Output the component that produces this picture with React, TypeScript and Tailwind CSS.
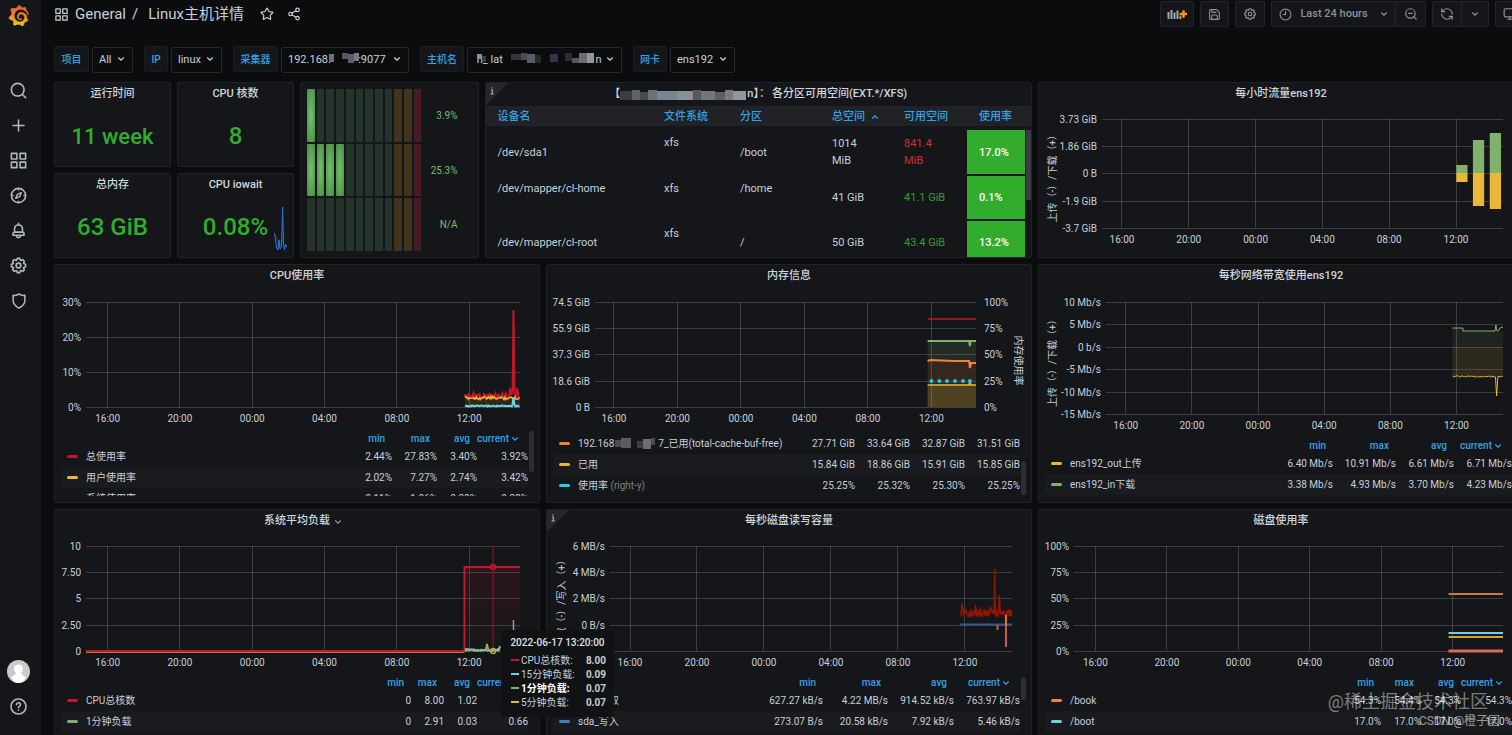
import React from "react";
import { Clock9, Monitor, RefreshCcw, Save, Share2, Star, ZoomOut } from "lucide-react";
import { SiGrafana } from "react-icons/si";

const ICONS = {
  search:
    "M21.71,20.29,18,16.61A9,9,0,1,0,16.61,18l3.68,3.68a1,1,0,0,0,1.42,0A1,1,0,0,0,21.71,20.29ZM11,18a7,7,0,1,1,7-7A7,7,0,0,1,11,18Z",
  plus: "M19,11H13V5a1,1,0,0,0-2,0v6H5a1,1,0,0,0,0,2h6v6a1,1,0,0,0,2,0V13h6a1,1,0,0,0,0-2Z",
  apps: "M10,13H3a1,1,0,0,0-1,1v7a1,1,0,0,0,1,1h7a1,1,0,0,0,1-1V14A1,1,0,0,0,10,13ZM9,20H4V15H9ZM21,2H14a1,1,0,0,0-1,1v7a1,1,0,0,0,1,1h7a1,1,0,0,0,1-1V3A1,1,0,0,0,21,2ZM20,9H15V4h5Zm1,4H14a1,1,0,0,0-1,1v7a1,1,0,0,0,1,1h7a1,1,0,0,0,1-1V14A1,1,0,0,0,21,13Zm-1,7H15V15h5ZM10,2H3A1,1,0,0,0,2,3v7a1,1,0,0,0,1,1h7a1,1,0,0,0,1-1V3A1,1,0,0,0,10,2ZM9,9H4V4H9Z",
  bell: "M18,13.18V10a6,6,0,0,0-5-5.91V3a1,1,0,0,0-2,0V4.09A6,6,0,0,0,6,10v3.18A3,3,0,0,0,4,16v2a1,1,0,0,0,1,1H8.14a4,4,0,0,0,7.72,0H19a1,1,0,0,0,1-1V16A3,3,0,0,0,18,13.18ZM8,10a4,4,0,0,1,8,0v3H8Zm4,10a2,2,0,0,1-1.72-1h3.44A2,2,0,0,1,12,20Zm6-3H6V16a1,1,0,0,1,1-1H17a1,1,0,0,1,1,1Z",
  cog: "M21.32,9.55l-1.89-.63.89-1.78A1,1,0,0,0,20.13,6L18,3.87a1,1,0,0,0-1.15-.19l-1.78.89-.63-1.89A1,1,0,0,0,13.5,2h-3a1,1,0,0,0-.95.68L8.92,4.57,7.14,3.68A1,1,0,0,0,6,3.87L3.87,6a1,1,0,0,0-.19,1.15l.89,1.78-1.89.63A1,1,0,0,0,2,10.5v3a1,1,0,0,0,.68.95l1.89.63-.89,1.78A1,1,0,0,0,3.87,18L6,20.13a1,1,0,0,0,1.15.19l1.78-.89.63,1.89a1,1,0,0,0,.95.68h3a1,1,0,0,0,.95-.68l.63-1.89,1.78.89A1,1,0,0,0,18,20.13L20.13,18a1,1,0,0,0,.19-1.15l-.89-1.78,1.89-.63A1,1,0,0,0,22,13.5v-3A1,1,0,0,0,21.32,9.55ZM20,12.78l-1.2.4A2,2,0,0,0,17.64,16l.57,1.14-1.1,1.1L16,17.64a2,2,0,0,0-2.79,1.16l-.4,1.2H11.22l-.4-1.2A2,2,0,0,0,8,17.64l-1.14.57-1.1-1.1L6.36,16A2,2,0,0,0,5.2,13.18L4,12.78V11.22l1.2-.4A2,2,0,0,0,6.36,8L5.79,6.89l1.1-1.1L8,6.36A2,2,0,0,0,10.82,5.2l.4-1.2h1.56l.4,1.2A2,2,0,0,0,16,6.36l1.14-.57,1.1,1.1L17.64,8a2,2,0,0,0,1.16,2.79l1.2.4ZM12,8a4,4,0,1,0,4,4A4,4,0,0,0,12,8Zm0,6a2,2,0,1,1,2-2A2,2,0,0,1,12,14Z",
};

function Icon({ d, className }: { d: string; className: string }) {
  return (
    <svg viewBox="0 0 24 24" fill="currentColor" className={className} aria-hidden="true">
      <path d={d} />
    </svg>
  );
}

function StrokeIcon({ className, children }: { className: string; children: React.ReactNode }) {
  return (
    <svg
      viewBox="0 0 24 24"
      fill="none"
      stroke="currentColor"
      strokeWidth="2"
      strokeLinecap="round"
      strokeLinejoin="round"
      className={className}
      aria-hidden="true"
    >
      {children}
    </svg>
  );
}

function Chevron({ className, up }: { className: string; up?: boolean }) {
  return (
    <svg viewBox="0 0 8 8" fill="none" stroke="currentColor" strokeWidth="1.2" strokeLinecap="round" className={className} aria-hidden="true">
      <path d={up ? "M1.5 5.2 4 2.8 6.5 5.2" : "M1.5 2.8 4 5.2 6.5 2.8"} />
    </svg>
  );
}

/* ---------- navigation ---------- */

function NavItem({ label, children }: { label: string; children: React.ReactNode }) {
  return (
    <a href="#" aria-label={label} className="flex h-[35px] w-full items-center justify-center pr-1">
      {children}
    </a>
  );
}

function Sidebar() {
  return (
    <nav className="flex w-[41px] shrink-0 flex-col bg-[#141619] text-[#b4b7bd]">
      <a href="#" aria-label="Grafana" className="flex h-[30px] items-center justify-center pr-1">
        <svg width="0" height="0" aria-hidden="true">
          <defs>
            <linearGradient id="brand" x1="0" y1="0" x2="0" y2="1">
              <stop offset="0" stopColor="#f0532a" />
              <stop offset="0.5" stopColor="#f5882a" />
              <stop offset="1" stopColor="#fbca0a" />
            </linearGradient>
          </defs>
        </svg>
        <SiGrafana fill="url(#brand)" stroke="url(#brand)" strokeWidth="0.6" className="size-[21px] shrink-0" />
      </a>
      <div className="mt-[43px] flex flex-col">
        <NavItem label="Search">
          <Icon d={ICONS.search} className="size-[19px]" />
        </NavItem>
        <NavItem label="Create">
          <Icon d={ICONS.plus} className="size-[19px]" />
        </NavItem>
        <NavItem label="Dashboards">
          <Icon d={ICONS.apps} className="size-[19px]" />
        </NavItem>
        <NavItem label="Explore">
          <StrokeIcon className="size-[19px]">
            <circle cx="12" cy="12" r="9" />
            <path d="M10.6 10.6 15.6 8.4 13.4 13.4 8.4 15.6Z" strokeWidth="1.7" />
            <path d="M12 3.5v1.6M12 19v1.5M3.5 12h1.6M19 12h1.5" strokeWidth="1.6" />
          </StrokeIcon>
        </NavItem>
        <NavItem label="Alerting">
          <Icon d={ICONS.bell} className="size-[19px]" />
        </NavItem>
        <NavItem label="Configuration">
          <Icon d={ICONS.cog} className="size-[19px]" />
        </NavItem>
        <NavItem label="Server admin">
          <StrokeIcon className="size-[18px]">
            <path d="M4.2 4.4C7.5 5 10 4.2 12 2.6 14 4.2 16.5 5 19.8 4.4V11.5C19.8 15.5 16.5 18.8 12 21.4 7.5 18.8 4.2 15.5 4.2 11.5Z" />
          </StrokeIcon>
        </NavItem>
      </div>
      <div className="mt-auto mb-[11px] flex flex-col">
        <NavItem label="Profile">
          <svg viewBox="0 0 22 22" className="size-[23px]" aria-hidden="true">
            <circle cx="11" cy="11" r="11" fill="#c9cacb" />
            <path d="M11 4.2c2.6 0 4.3 1.8 4.3 4.2 0 1.7-.7 3.2-1.8 4 .2 2.2 3.6 2 4.5 4.4C16.500 19.800 14 22 11 22s-5.500-2.200-7-5.200c.9-2.400 4.300-2.200 4.500-4.400-1.100-.8-1.800-2.300-1.800-4C6.700 6 8.400 4.200 11 4.200Z" fill="#fff" />
          </svg>
        </NavItem>
        <NavItem label="Help">
          <StrokeIcon className="size-[19px]">
            <circle cx="12" cy="12" r="9.500" />
            <path d="M9.400 9.600c.2-1.500 1.200-2.300 2.600-2.300 1.500 0 2.600.9 2.600 2.300 0 1.800-2.600 2-2.600 3.900M12 16.600v.1" />
          </StrokeIcon>
        </NavItem>
      </div>
    </nav>
  );
}

const TOOL = "flex h-[26px] items-center justify-center border border-[#222428] bg-[#141619] text-[#8e9196]";

function TopBar() {
  return (
    <header className="flex h-7 items-center justify-between text-[#c7d0d9]">
      <div className="flex items-center">
        <Icon d={ICONS.apps} className="size-[15px]" />
        <h1 className="ml-1.5 text-[15px] leading-7 whitespace-pre">
          <a href="#">General</a>
          <span className="mx-1.5">/</span>
          <a href="#" className="ml-1">Linux主机详情</a>
        </h1>
        <button type="button" aria-label="Mark as favorite" className="ml-4">
          <Star className="size-[14px]" />
        </button>
        <button type="button" aria-label="Share dashboard" className="ml-[13px]">
          <Share2 className="size-[14px]" />
        </button>
      </div>
      <div className="flex">
        <button type="button" aria-label="Add panel" className={`${TOOL} mr-1.5 w-[34px] rounded-xs`}>
          <svg viewBox="0 0 20 14" className="h-[14px] w-[20px]" aria-hidden="true">
            <path d="M1.500 5v7M4.500 3v9M7.500 5.500V12M10.500 3.500V12M13.500 7v5" stroke="#a3a6ab" strokeWidth="2" />
            <path d="M16.500 3v8M12.500 7h8" stroke="#141619" strokeWidth="4" />
            <path d="M16.500 3.300v7.400M12.800 7h7.200" stroke="#f79520" strokeWidth="2.400" />
          </svg>
        </button>
        <button type="button" aria-label="Save dashboard" className={`${TOOL} mr-1.5 w-[29px] rounded-xs`}>
          <Save className="size-[13px]" />
        </button>
        <button type="button" aria-label="Dashboard settings" className={`${TOOL} mr-1.5 w-[30px] rounded-xs`}>
          <Icon d={ICONS.cog} className="size-[14px]" />
        </button>
        <button type="button" className={`${TOOL} w-[125px] gap-2 rounded-l-xs text-[11px] font-medium`}>
          <Clock9 className="size-[13px]" />
          Last 24 hours
          <Chevron className="ml-1 size-2" />
        </button>
        <button type="button" aria-label="Zoom out" className={`${TOOL} mr-1.5 w-[30px] rounded-r-xs border-l-0`}>
          <ZoomOut className="size-[14px]" />
        </button>
        <button type="button" aria-label="Refresh" className={`${TOOL} w-[30px] rounded-l-xs`}>
          <RefreshCcw className="size-[14px]" />
        </button>
        <button type="button" aria-label="Refresh interval" className={`${TOOL} mr-1.5 w-[27px] rounded-r-xs border-l-0`}>
          <Chevron className="size-2" />
        </button>
        <button type="button" aria-label="Cycle view mode" className={`${TOOL} w-[29px] rounded-xs`}>
          <Monitor className="size-[14px]" />
        </button>
      </div>
    </header>
  );
}

/* ---------- template variables ---------- */

type Block = [number, number, number, number, string];

function Mosaic({ blocks, className }: { blocks: Block[]; className: string }) {
  return (
    <svg className={`pointer-events-none overflow-visible ${className}`} shapeRendering="crispEdges" aria-hidden="true">
      {blocks.map(([x, y, w, h, fill], i) => (
        <rect key={i} x={x} y={y} width={w} height={h} fill={fill} />
      ))}
    </svg>
  );
}

function Variable({
  id,
  label,
  labelWidth,
  value,
  width,
  blocks,
}: {
  id: string;
  label: string;
  labelWidth: string;
  value: string;
  width: string;
  blocks?: Block[];
}) {
  return (
    <div className="flex h-[26px] gap-[3px]">
      <label
        htmlFor={id}
        className={`flex items-center justify-center rounded-xs border border-[#1b1d20] bg-[#141619] text-[10px] font-medium text-[#33a2e5] ${labelWidth}`}
      >
        {label}
      </label>
      <div className={`relative ${width}`}>
        <select id={id} className="size-full appearance-none rounded-xs border border-[#26282c] bg-[#0b0c0e] pl-1.5 text-[11px] text-[#c7d0d9]">
          <option>{value}</option>
        </select>
        {blocks && <Mosaic blocks={blocks} className="absolute inset-0 size-full" />}
        <Chevron className="pointer-events-none absolute top-[9px] right-2 size-2 text-[#c7d0d9]" />
      </div>
    </div>
  );
}

const NB = "\u00a0";

const IP_BLOCKS: Block[] = [
  [48, 8, 5, 8, "#6f7277"],
  [61, 7, 6, 6, "#55575f"],
  [67, 8, 6, 9, "#5b5d70"],
  [73, 7, 5, 8, "#777a80"],
];

const HOST_BLOCKS: Block[] = [
  [10, 8, 5, 5, "#8b8e93"],
  [15, 10, 4, 6, "#3a3c40"],
  [44, 8, 10, 6, "#34363a"],
  [54, 7, 6, 7, "#4a4c52"],
  [60, 8, 8, 9, "#5a5c6c"],
  [68, 9, 6, 8, "#26282c"],
  [83, 8, 8, 8, "#33324a"],
  [98, 7, 7, 8, "#2b2d31"],
  [105, 12, 7, 5, "#55575c"],
  [112, 7, 8, 10, "#6b6d73"],
  [120, 7, 7, 10, "#94969a"],
];

function Variables() {
  return (
    <form className="mt-[18px] flex gap-[11px]">
      <Variable id="var-project" label="项目" labelWidth="w-[35px]" value="All" width="w-[41px]" />
      <Variable id="var-ip" label="IP" labelWidth="w-6" value="linux" width="w-[51px]" />
      <Variable id="var-collector" label="采集器" labelWidth="w-[45px]" value={`192.168.${NB.repeat(10)}:9077`} width="w-[128px]" blocks={IP_BLOCKS} />
      <Variable id="var-host" label="主机名" labelWidth="w-[44px]" value={`${NB}h_${NB}lat${NB.repeat(34)}n`} width="w-[155px]" blocks={HOST_BLOCKS} />
      <Variable id="var-nic" label="网卡" labelWidth="w-[34px]" value="ens192" width="w-[65px]" />
    </form>
  );
}

/* ---------- panels ---------- */

function Panel({
  title,
  className,
  info,
  menu,
  children,
}: {
  title?: React.ReactNode;
  className: string;
  info?: boolean;
  menu?: boolean;
  children: React.ReactNode;
}) {
  return (
    <section className={`relative flex min-w-0 flex-col rounded-xs border border-[#202226] bg-[#141619] ${className}`}>
      {info && (
        <svg viewBox="0 0 22 22" className="absolute top-0 left-0 size-[22px]" aria-label="Panel info">
          <path d="M0 0H22L0 22Z" fill="#25272b" />
          <path d="M6 4.200v1.400M5 7.200h1.300v3.500M4.600 10.900h3" stroke="#a3a6ab" strokeWidth="1.200" fill="none" />
        </svg>
      )}
      {title && (
        <h2 className={`flex h-[23px] shrink-0 items-center justify-center text-[11px] font-medium text-[#d0d6dd] ${menu ? "pl-3" : ""}`}>
          {title}
          {menu && <Chevron className="ml-1 size-2 text-[#8e9196]" />}
        </h2>
      )}
      {children}
    </section>
  );
}

function Stat({ title, value, size, className, children }: { title: string; value: string; size: string; className: string; children?: React.ReactNode }) {
  return (
    <Panel title={title} className={className}>
      <div className={`flex flex-1 items-center justify-center font-medium text-[#32ac2d] ${size}`}>{value}</div>
      {children}
    </Panel>
  );
}

const LED_OFF = ["bg-[#24342a]", "bg-[#3f351c]", "bg-[#471c27]"];

function LedRow({ lit, label }: { lit: number; label: string }) {
  return (
    <div className="flex flex-1 items-center">
      <div className="flex h-full flex-1 gap-[2px]">
        {Array.from({ length: 12 }, (_, i) => {
          const off = LED_OFF[i < 9 ? 0 : i < 11 ? 1 : 2];
          return (
            <div
              key={i}
              className={`flex-1 rounded-[1px] ${i < lit ? "bg-[radial-gradient(ellipse_at_center,#6fbb66_10%,#4c8e47_95%)]" : off}`}
            />
          );
        })}
      </div>
      <span className="w-9 text-right text-[10px] text-[#73bf69]">{label}</span>
    </div>
  );
}

type DiskRow = {
  device: string;
  mount: string;
  total: string;
  free: string;
  used: string;
  low?: boolean;
  raised?: boolean;
};

const DISKS: DiskRow[] = [
  { device: "/dev/sda1", mount: "/boot", total: "1014 MiB", free: "841.4 MiB", used: "17.0%", low: true },
  { device: "/dev/mapper/cl-home", mount: "/home", total: "41 GiB", free: "41.1 GiB", used: "0.1%", raised: true },
  { device: "/dev/mapper/cl-root", mount: "/", total: "50 GiB", free: "43.4 GiB", used: "13.2%" },
];

const TITLE_BLOCKS: Block[] = [
  [0, 3, 12, 9, "#3a3d44"],
  [12, 2, 8, 10, "#5d636c"],
  [20, 4, 8, 8, "#454b55"],
  [28, 2, 9, 10, "#6b7079"],
  [37, 3, 20, 9, "#768690"],
  [57, 3, 16, 9, "#8a9096"],
  [73, 2, 8, 10, "#565763"],
  [81, 3, 14, 9, "#74757f"],
  [95, 4, 10, 8, "#5b5f69"],
  [105, 2, 8, 10, "#797a84"],
  [113, 3, 13, 9, "#93959b"],
];

function DiskTable() {
  return (
    <Panel
      info
      className="col-span-9 row-span-2 overflow-hidden"
      title={
        <>
          【<Mosaic blocks={TITLE_BLOCKS} className="h-[14px] w-[127px]" />n】：<span className="ml-0.5">各分区可用空间(EXT.*/XFS)</span>
        </>
      }
    >
      <div className="relative flex-1 overflow-hidden">
        <div className="absolute top-6 right-0 h-[70px] w-[5px] bg-[#3b3b42]" />
        <table className="w-full table-fixed border-collapse text-left text-[11px] leading-[17px] text-[#c7d0d9]">
          <thead>
            <tr className="h-5 bg-[#202226] text-[#33a2e5]">
              <th className="pl-3 font-medium">设备名</th>
              <th className="w-[76px] pl-3 font-medium">文件系统</th>
              <th className="w-[92px] pl-3 font-medium">分区</th>
              <th className="w-[72px] pl-3 font-medium whitespace-nowrap">
                总空间
                <Chevron up className="ml-1.5 inline size-2" />
              </th>
              <th className="w-[75px] pl-3 font-medium">可用空间</th>
              <th className="w-[58px] pl-3 font-medium">使用率</th>
              <th className="w-1.5" />
            </tr>
            <tr className="h-1" />
          </thead>
          <tbody>
            {DISKS.map((d) => {
              const side = d.raised ? "align-top" : "align-middle";
              return (
                <tr key={d.device} className="h-[45px] border-b-2 border-[#141619]">
                  <td className={`py-1 pl-3 ${side}`}>{d.device}</td>
                  <td className="py-1 pl-3 align-top">xfs</td>
                  <td className={`py-1 pl-3 ${side}`}>{d.mount}</td>
                  <td className="py-1 pr-5 pl-3">{d.total}</td>
                  <td className={`py-1 pl-3 ${d.low ? "pr-8 text-[#d42f2f]" : "text-[#32a02d]"}`}>{d.free}</td>
                  <td className="bg-[#32ac2d] pl-3 font-medium text-white">{d.used}</td>
                  <td />
                </tr>
              );
            })}
          </tbody>
        </table>
      </div>
    </Panel>
  );
}

/* ---------- charts ---------- */

type Tick = [number, string];

const HOURS = ["16:00", "20:00", "00:00", "04:00", "08:00", "12:00"];

function Chart({
  ticks,
  rightTicks,
  height,
  top,
  left,
  right,
  axisLabel,
  rightLabel,
  paths,
  children,
}: {
  ticks: Tick[];
  rightTicks?: Tick[];
  height: number;
  top: string;
  left: string;
  right: string;
  axisLabel?: { text: string; x: number };
  rightLabel?: string;
  paths?: React.ReactNode;
  children?: React.ReactNode;
}) {
  return (
    <div className={`shrink-0 pb-6 ${top} ${left} ${right}`}>
      <svg width="100%" height={height} className="block overflow-visible text-[10px]" fill="#c7d0d9">
        <g stroke="#fff" strokeOpacity="0.17" shapeRendering="crispEdges">
          {ticks.map(([y]) => (
            <line key={y} x1="0" x2="100%" y1={y} y2={y} />
          ))}
          {HOURS.map((h, i) => (
            <line key={h} x1={`${4.98 + i * 16.66}%`} x2={`${4.98 + i * 16.66}%`} y1="0" y2={height} />
          ))}
        </g>
        {HOURS.map((h, i) => (
          <text key={h} x={`${4.98 + i * 16.66}%`} y={height + 11} textAnchor="middle" dominantBaseline="central">
            {h}
          </text>
        ))}
        {ticks.map(([y, label]) => (
          <text key={label} x="-5" y={y} textAnchor="end" dominantBaseline="central">
            {label}
          </text>
        ))}
        {axisLabel && (
          <text transform={`translate(${axisLabel.x} ${height / 2 + 49}) rotate(-90)`} dominantBaseline="central">
            {axisLabel.text}
          </text>
        )}
        <svg width="100%" height={height} viewBox={`0 0 1000 ${height}`} preserveAspectRatio="none" overflow="visible" fill="none" strokeWidth="1.500">
          {paths}
        </svg>
        {children}
        {rightTicks && (
          <svg x="100%" overflow="visible">
            {rightTicks.map(([y, label]) => (
              <text key={label} x="8" y={y} dominantBaseline="central">
                {label}
              </text>
            ))}
            <text transform={`translate(42 ${height / 2 + 6}) rotate(90)`} textAnchor="middle" dominantBaseline="central">
              {rightLabel}
            </text>
          </svg>
        )}
      </svg>
    </div>
  );
}

function Line({ d, color, width, fill }: { d: string; color: string; width?: number; fill?: string }) {
  return <path d={d} stroke={color} strokeWidth={width} fill={fill ?? "none"} vectorEffect="non-scaling-stroke" />;
}

function jitter(i: number, seed: number) {
  const v = Math.sin(i * 12.9898 + seed * 78.233) * 43758.5453;
  return v - Math.floor(v);
}

function noisy(from: number, to: number, step: number, base: number, amp: number, seed: number, peaks: Record<number, number> = {}) {
  const points: string[] = [];
  for (let x = from, i = 0; x <= to; x += step, i++) {
    const y = peaks[x] ?? base + (jitter(i, seed) - 0.5) * amp;
    points.push(`${x} ${y.toFixed(1)}`);
  }
  return `M${points.join("L")}`;
}

function Legend({
  widths,
  headers,
  rows,
  thumb,
}: {
  widths: string[];
  headers?: boolean;
  rows: { color: string; name: React.ReactNode; values: string[] }[];
  thumb?: string;
}) {
  const names = ["min", "max", "avg", "current"];
  return (
    <div className="relative mr-[11px] mb-1.5 ml-1.5 min-h-0 flex-1">
      <div className={`h-full overflow-hidden ${headers ? "" : "pt-0.5"}`}>
        <table className="w-full table-fixed border-collapse text-[10px] whitespace-nowrap text-[#c7d0d9]">
          <colgroup>
            <col />
            {widths.map((w, i) => (
              <col key={i} className={w} />
            ))}
          </colgroup>
          {headers && (
            <thead>
              <tr className="h-[15px] text-right text-[#33a2e5]">
                <th aria-label="series" />
                {names.map((n, i) => (
                  <th key={n} className={`leading-[15px] font-medium ${i < 3 ? "pr-[7px]" : "pr-2.5"}`}>
                    {n}
                    {i === 3 && <Chevron className="ml-0.5 inline size-2" />}
                  </th>
                ))}
              </tr>
            </thead>
          )}
          <tbody>
            {rows.map((r, i) => (
              <tr key={i} className="h-[21px] odd:bg-transparent even:bg-[#191b1f]">
                <td>
                  <div className="flex h-[21px] items-center gap-2 pl-1.5">
                    <span className={`h-[3px] w-[11px] shrink-0 rounded-xs ${r.color}`} />
                    <span>{r.name}</span>
                  </div>
                </td>
                {r.values.map((v, j) => (
                  <td key={j} className="text-right">
                    {v}
                  </td>
                ))}
              </tr>
            ))}
          </tbody>
        </table>
      </div>
      {thumb && <div className={`absolute -right-1.5 w-[5px] rounded-xs bg-[#2c2e33] ${thumb}`} />}
    </div>
  );
}

function TrafficPanel() {
  const bars = [
    [88.35, 46, 63],
    [92.5, 21, 87],
    [96.7, 14, 90],
  ];
  return (
    <Panel title="每小时流量ens192" className="col-span-8 row-span-2">
      <Chart
        ticks={[[0, "3.73 GiB"], [27, "1.86 GiB"], [54, "0 B"], [82, "-1.9 GiB"], [109, "-3.7 GiB"]]}
        height={109}
        top="pt-[13px]"
        left="pl-[63px]"
        right="pr-5"
        axisLabel={{ text: "上传（-）/下载（+）", x: -50 }}
      >
        {bars.map(([x, up, down]) => (
          <g key={x}>
            <rect x={`${x}%`} y={up} width="2.8%" height={54 - up} fill="#7eb26d" />
            <rect x={`${x}%`} y={54} width="2.8%" height={down - 54} fill="#eab839" />
          </g>
        ))}
      </Chart>
    </Panel>
  );
}

function CpuPanel() {
  return (
    <Panel title="CPU使用率" className="col-span-8">
      <Chart
        ticks={[[0, "30%"], [35, "20%"], [70, "10%"], [105, "0%"]]}
        height={105}
        top="pt-[14px]"
        left="pl-[31px]"
        right="pr-[19px]"
        paths={
          <>
            <path d="M873 96H1000V105H873Z" fill="#eab839" fillOpacity="0.12" />
            <Line d={noisy(873, 1000, 2, 94, 6, 1, { 977: 86, 979: 92, 983: 88, 985: 8, 987: 88, 993: 86, 995: 90 })} color="#c4162a" width={2} />
            <Line d={noisy(873, 1000, 2, 96, 3, 2)} color="#eab839" />
            <Line d={noisy(873, 1000, 2, 104, 1, 3, { 983: 102, 985: 95, 987: 102 })} color="#6ed0e0" width={2} />
          </>
        }
      />
      <Legend
        headers
        widths={["w-[45px]", "w-[45px]", "w-[40px]", "w-[51px]"]}
        thumb="top-0 h-[41px]"
        rows={[
          { color: "bg-[#c4162a]", name: "总使用率", values: ["2.44%", "27.83%", "3.40%", "3.92%"] },
          { color: "bg-[#eab839]", name: "用户使用率", values: ["2.02%", "7.27%", "2.74%", "3.42%"] },
          { color: "bg-transparent", name: "系统使用率", values: ["0.11%", "1.06%", "0.20%", "0.20%"] },
        ]}
      />
    </Panel>
  );
}

function MemoryPanel() {
  return (
    <Panel title="内存信息" className="col-span-8">
      <Chart
        ticks={[[0, "74.5 GiB"], [26, "55.9 GiB"], [52, "37.3 GiB"], [79, "18.6 GiB"], [105, "0 B"]]}
        rightTicks={[[0, "100%"], [26, "75%"], [52, "50%"], [79, "25%"], [105, "0%"]]}
        rightLabel="内存使用率"
        height={105}
        top="pt-[14px]"
        left="pl-12"
        right="pr-[55px]"
        paths={
          <>
            <path d="M873 39H1000V59H873Z" fill="#7eb26d" fillOpacity="0.14" />
            <path d="M873 59H1000V83H873Z" fill="#ef843c" fillOpacity="0.16" />
            <path d="M873 83H1000V105H873Z" fill="#eab839" fillOpacity="0.28" />
            <Line d="M873 17H1000" color="#c4162a" />
            <Line d="M873 39H982L984 44L986 39H1000" color="#7eb26d" width={2} />
            <Line d="M873 59L880 58L940 59L982 59L984 66L987 61H1000" color="#ef843c" width={2} />
            <Line d="M873 83H982L984 79L986 83H1000" color="#eab839" />
          </>
        }
      >
        {["88.3%", "90.4%", "92.4%", "94.5%", "96.6%", "98.4%"].map((cx) => (
          <circle key={cx} cx={cx} cy="79" r="1.900" fill="#1fcfe6" />
        ))}
      </Chart>
      <Legend
        widths={["w-[55px]", "w-[55px]", "w-[55px]", "w-[55px]"]}
        thumb="top-[30px] h-[34px]"
        rows={[
          {
            color: "bg-[#ef843c]",
            name: (
              <span className="flex items-center">
                192.168
                <Mosaic
                  className="h-3 w-[44px]"
                  blocks={[
                    [1, 2, 6, 7, "#4b4d52"],
                    [7, 0, 10, 10, "#5b5d62"],
                    [23, 3, 6, 7, "#3c3e43"],
                    [29, 1, 8, 10, "#6d6f74"],
                    [37, 0, 4, 7, "#4b4d52"],
                  ]}
                />
                7_已用(total-cache-buf-free)
              </span>
            ),
            values: ["27.71 GiB", "33.64 GiB", "32.87 GiB", "31.51 GiB"],
          },
          { color: "bg-[#eab839]", name: "已用", values: ["15.84 GiB", "18.86 GiB", "15.91 GiB", "15.85 GiB"] },
          {
            color: "bg-[#1fcfe6]",
            name: (
              <>
                使用率 <span className="text-[#7b8087]">(right-y)</span>
              </>
            ),
            values: ["25.25%", "25.32%", "25.30%", "25.25%"],
          },
        ]}
      />
    </Panel>
  );
}

function BandwidthPanel() {
  return (
    <Panel title="每秒网络带宽使用ens192" className="col-span-8">
      <Chart
        ticks={[[0, "10 Mb/s"], [22, "5 Mb/s"], [45, "0 b/s"], [67, "-5 Mb/s"], [90, "-10 Mb/s"], [112, "-15 Mb/s"]]}
        height={112}
        top="pt-[14px]"
        left="pl-[67px]"
        right="pr-5"
        axisLabel={{ text: "上传（-）/下载（+）", x: -54 }}
        paths={
          <>
            <path d="M873 26H899V29H1000V45H873Z" fill="#7eb26d" fillOpacity="0.1" />
            <path d="M873 45H1000V75H873Z" fill="#eab839" fillOpacity="0.12" />
            <Line d="M873 26H899V29H980L982 23L985 29L990 28L992 26L1000 25" color="#7eb26d" width={1} />
            <Line d={noisy(873, 1000, 3, 74.5, 1.5, 4, { 981: 75, 984: 94, 987: 75 })} color="#eab839" width={1} />
          </>
        }
      />
      <Legend
        headers
        widths={["w-[70px]", "w-[63px]", "w-[58px]", "w-[58px]"]}
        rows={[
          { color: "bg-[#eab839]", name: "ens192_out上传", values: ["6.40 Mb/s", "10.91 Mb/s", "6.61 Mb/s", "6.71 Mb/s"] },
          { color: "bg-[#7eb26d]", name: "ens192_in下载", values: ["3.38 Mb/s", "4.93 Mb/s", "3.70 Mb/s", "4.23 Mb/s"] },
        ]}
      />
    </Panel>
  );
}

function Tooltip() {
  const rows: [string, string, string, boolean?][] = [
    ["bg-[#c4162a]", "CPU总核数:", "8.00"],
    ["bg-[#6ed0e0]", "15分钟负载:", "0.09"],
    ["bg-[#7eb26d]", "1分钟负载:", "0.07", true],
    ["bg-[#eab839]", "5分钟负载:", "0.07"],
  ];
  return (
    <div role="tooltip" className="absolute top-[120px] left-[446px] z-10 w-[113px] rounded-xs bg-[#111213] px-2 pt-1.5 pb-2 text-[10px] text-[#c7d0d9]">
      <div className="mb-[3px] text-center leading-[14px] font-medium whitespace-nowrap text-[#dfe3e8]">2022-06-17 13:20:00</div>
      {rows.map(([color, name, value, active]) => (
        <div key={name} className="flex h-[14px] items-center">
          <span className={`mr-0.5 ml-0.5 h-[2px] w-2 ${color}`} />
          <span className={`flex-1 whitespace-nowrap ${active ? "font-bold text-white" : ""}`}>{name}</span>
          <span className="font-bold">{value}</span>
        </div>
      ))}
    </div>
  );
}

function LoadPanel() {
  return (
    <Panel title="系统平均负载" menu className="col-span-8">
      <Chart
        ticks={[[0, "10"], [26, "7.50"], [52, "5"], [79, "2.50"], [105, "0"]]}
        height={105}
        top="pt-[13px]"
        left="pl-[31px]"
        right="pr-[19px]"
        paths={
          <>
            <defs>
              <linearGradient id="load" x1="0" y1="0" x2="0" y2="1">
                <stop offset="0" stopColor="#c4162a" stopOpacity="0.13" />
                <stop offset="1" stopColor="#c4162a" stopOpacity="0.02" />
              </linearGradient>
            </defs>
            <path d="M873 21H1000V105H873Z" fill="url(#load)" />
            <Line d="M0 106H872" color="#b07b4a" width={2} />
            <Line d="M0 105H872V21H1000" color="#c4162a" width={2} />
            <Line d="M938 0V105" color="#9a1420" width={1} />
            <Line d={noisy(873, 956, 3, 104, 2, 5, { 924: 98, 954: 100 })} color="#eab839" />
            <Line d={noisy(873, 956, 3, 104, 2, 6, { 954: 101 })} color="#6ed0e0" />
            <Line d={noisy(873, 956, 3, 104, 3, 7, { 924: 99 })} color="#7eb26d" width={1} />
            <Line d="M985 74V105" color="#7eb26d" />
          </>
        }
      >
        <circle cx="93.8%" cy="21" r="2.500" fill="none" stroke="#c4162a" strokeWidth="1.500" />
        <circle cx="93.8%" cy="105" r="2.500" fill="none" stroke="#b9a63c" strokeWidth="1.500" />
      </Chart>
      <Legend
        headers
        widths={["w-[40px]", "w-[33px]", "w-[33px]", "w-[51px]"]}
        rows={[
          { color: "bg-[#c4162a]", name: "CPU总核数", values: ["0", "8.00", "1.02", "8.00"] },
          { color: "bg-[#7eb26d]", name: "1分钟负载", values: ["0", "2.91", "0.03", "0.66"] },
        ]}
      />
      <Tooltip />
    </Panel>
  );
}

function DiskIoPanel() {
  return (
    <Panel title="每秒磁盘读写容量" info className="col-span-8">
      <Chart
        ticks={[[0, "6 MB/s"], [26, "4 MB/s"], [52, "2 MB/s"], [79, "0 B/s"], [105, "-2 MB/s"]]}
        height={105}
        top="pt-[13px]"
        left="pl-[63px]"
        right="pr-[19px]"
        axisLabel={{ text: "读取（-）/写入（+）", x: -49 }}
        paths={
          <>
            <Line
              d={noisy(873, 1000, 1, 67, 8, 8, { 875: 57, 878: 60, 909: 59, 922: 61, 946: 60, 956: 50, 957: 23, 958: 50, 968: 50, 969: 50 })}
              color="#8f1503"
            />
            <Line d="M870 78.500H1000" color="#2f5b96" width={2} />
            <Line d="M964 79V84" color="#d8573c" width={2} />
            <Line d="M985 69V80" color="#e0752d" width={2} />
            <Line d="M985 80V101" color="#d8573c" width={2} />
          </>
        }
      />
      <Legend
        headers
        widths={["w-[66px]", "w-[65px]", "w-[66px]", "w-[66px]"]}
        thumb="top-0.5 h-[23px]"
        rows={[
          { color: "bg-[#8f1503]", name: "sda_读取", values: ["627.27 kB/s", "4.22 MB/s", "914.52 kB/s", "763.97 kB/s"] },
          { color: "bg-[#447ebc]", name: "sda_写入", values: ["273.07 B/s", "20.58 kB/s", "7.92 kB/s", "5.46 kB/s"] },
        ]}
      />
    </Panel>
  );
}

function DiskUsagePanel() {
  return (
    <Panel title="磁盘使用率" className="col-span-8">
      <Chart
        ticks={[[0, "100%"], [26, "75%"], [52, "50%"], [79, "25%"], [105, "0%"]]}
        height={105}
        top="pt-[13px]"
        left="pl-[35px]"
        right="pr-5"
        paths={
          <>
            <Line d="M873 48H1000" color="#c97a42" width={2} />
            <Line d="M873 87H1000" color="#6ed0e0" width={2} />
            <Line d="M873 91H1000" color="#c9a83a" width={2} />
            <Line d="M873 105H1000" color="#d86a52" width={3} />
          </>
        }
      />
      <Legend
        headers
        widths={["w-[40px]", "w-[40px]", "w-[40px]", "w-[51px]"]}
        thumb="top-0.5 h-[23px]"
        rows={[
          { color: "bg-[#ef843c]", name: "/book", values: ["54.3%", "54.4%", "54.3%", "54.3%"] },
          { color: "bg-[#6ed0e0]", name: "/boot", values: ["17.0%", "17.0%", "17.0%", "17.0%"] },
        ]}
      />
    </Panel>
  );
}

export default function App() {
  return (
    <div className="flex h-screen overflow-hidden bg-[#0b0c0e] font-['Roboto','Noto_Sans_CJK_SC',sans-serif]">
      <Sidebar />
      <main className="relative min-w-0 flex-1 overflow-hidden pl-[13px]">
        <div className="-mr-3">
          <TopBar />
          <Variables />
          <div className="mt-2.5 grid grid-cols-24 grid-rows-[85px_85px_239px_239px] gap-1.5">
            <Stat title="运行时间" value="11 week" size="text-[22px]" className="col-span-2" />
            <Stat title="CPU 核数" value="8" size="text-[24px]" className="col-span-2" />
            <Panel className="col-span-3 row-span-2">
              <div className="flex flex-1 flex-col gap-[2px] py-1.5 pr-5 pl-1.5">
                <LedRow lit={1} label="3.9%" />
                <LedRow lit={4} label="25.3%" />
                <LedRow lit={0} label="N/A" />
              </div>
            </Panel>
            <DiskTable />
            <TrafficPanel />
            <Stat title="总内存" value="63 GiB" size="text-[24px]" className="col-span-2" />
            <Stat title="CPU iowait" value="0.08%" size="text-[24px]" className="col-span-2">
              <svg viewBox="0 0 13 44" className="absolute right-1.5 bottom-1.5 h-[44px] w-[13px]" aria-hidden="true">
                <path
                  d="M.5 26 1.500 32 2.500 41 4 43 5 33 6 42 7.500 40 8.600 0 9.500 36 10.500 43 11.500 37 12.500 40"
                  fill="#1f60c4"
                  fillOpacity="0.25"
                  stroke="#3274d9"
                />
              </svg>
            </Stat>
            <CpuPanel />
            <MemoryPanel />
            <BandwidthPanel />
            <LoadPanel />
            <DiskIoPanel />
            <DiskUsagePanel />
          </div>
        </div>
        <div className="pointer-events-none absolute right-6 bottom-5 text-[18px] leading-[26px] text-white/45">@稀土掘金技术社区</div>
        <div className="pointer-events-none absolute right-3 bottom-1.5 text-[12px] leading-4 text-white/55">CSDN @橙子园</div>
      </main>
    </div>
  );
}
